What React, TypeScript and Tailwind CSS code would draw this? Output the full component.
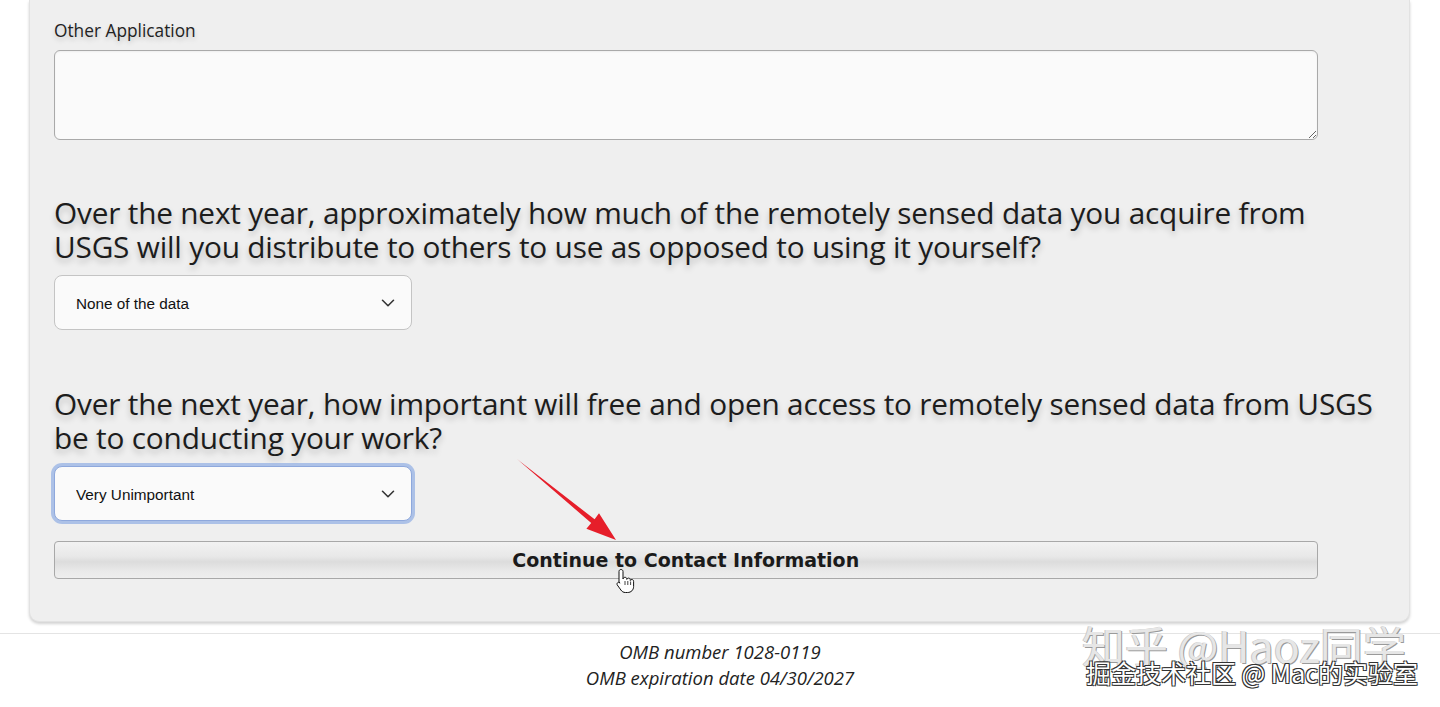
import { ChevronDown } from "lucide-react";

function Select({ value, focused = false }: { value: string; focused?: boolean }) {
  return (
    <div className="relative w-[358px] h-[55px]">
      <select
        defaultValue={value}
        className={`appearance-none block w-full h-full rounded-[8px] bg-[#fafafa] pl-[21px] pr-10 pt-[3px] text-[15.3px] text-[#111] font-['Liberation_Sans',Arial,sans-serif] outline-none ${
          focused
            ? "border border-[#8ea8dc] shadow-[0_0_0_3px_rgba(150,178,228,0.75)]"
            : "border border-[#c4c4c4]"
        }`}
      >
        <option>{value}</option>
      </select>
      <ChevronDown
        size={22}
        strokeWidth={1.7}
        className="pointer-events-none absolute right-[13px] top-1/2 -translate-y-1/2 text-[#333]"
      />
    </div>
  );
}

const headingCls =
  "text-[29.8px] leading-[34px] text-[#1c1c1c] tracking-[-0.2px] [text-shadow:0_4px_6px_rgba(0,0,0,0.22)]";

export default function App() {
  return (
    <div className="relative min-h-[707px] bg-white overflow-hidden font-['Open_Sans','Noto_Sans',sans-serif]">
      <div className="ml-[29px] w-[1381px] bg-[#efefef] rounded-b-[10px] border-x border-b border-[#e2e2e2] shadow-[0_2px_3px_rgba(0,0,0,0.18)] pl-[24px] pr-[25px] pt-[19px] pb-[42px]">
        <label className="block text-[17.3px] leading-[24px] text-[#222] [text-shadow:0_3px_5px_rgba(0,0,0,0.18)]">
          Other Application
        </label>
        <textarea className="mt-[7px] block w-[95%] h-[90px] rounded-[6px] border border-[#a9a9a9] bg-[#fafafa] shadow-[inset_0_1px_2px_rgba(0,0,0,0.05)] outline-none" />

        <h2 className={`mt-[56px] ${headingCls}`}>
          Over the next year, approximately how much of the remotely sensed data you acquire from USGS will you
          distribute to others to use as opposed to using it yourself?
        </h2>
        <div className="mt-[11px]">
          <Select value="None of the data" />
        </div>

        <h2 className={`mt-[57px] ${headingCls}`}>
          Over the next year, how important will free and open access to remotely sensed data from USGS be to
          conducting your work?
        </h2>
        <div className="mt-[11px]">
          <Select value="Very Unimportant" focused />
        </div>

        <button className="mt-[20px] block w-[95%] h-[38px] rounded-[4px] border border-[#a8a8a8] bg-[linear-gradient(to_bottom,#f2f2f2_0%,#e8e8e8_40%,#dcdcdc_55%,#e9e9e9_80%,#eeeeee_100%)] text-[19px] font-bold text-[#1a1a1a] font-['DejaVu_Sans',Verdana,sans-serif]">
          Continue to Contact Information
        </button>
      </div>

      <div className="mt-[11px] border-t border-[#e4e4e4] pt-[5px] text-center italic text-[18.5px] leading-[26px] text-[#222]">
        <p>OMB number 1028-0119</p>
        <p>OMB expiration date 04/30/2027</p>
      </div>

      {/* annotation arrow + cursor */}
      <svg className="pointer-events-none absolute left-0 top-0" width="1440" height="707">
        <polygon
          points="517,459 519.5,461 594.6,519.3 599,513.2 616,540 586.4,528.8 591.2,523"
          fill="#e61e2a"
        />
        <g transform="translate(616,568)">
          <path
            d="M5 1.5c1.2 0 2 .8 2 2V11l.2-.1c0-1 .8-1.6 1.8-1.6s1.8.7 1.8 1.7v.4c.2-.8.9-1.3 1.7-1.3 1 0 1.8.7 1.8 1.7v.7c.3-.6.9-1 1.6-1 1 0 1.7.8 1.7 1.8v5.2c0 3.5-2.5 6-6 6h-2.2c-2 0-3.4-.9-4.5-2.5L1.3 17c-.6-.9-.3-2 .6-2.5.8-.4 1.6-.2 2.2.5L3 14.5V3.5c0-1.2.8-2 2-2z"
            fill="#fff"
            stroke="#111"
            strokeWidth="1"
          />
          <path d="M9 13v4M11.8 13v4M14.6 13.5v3.5" stroke="#111" strokeWidth="0.8" />
        </g>
      </svg>

      {/* watermark */}
      <div className="pointer-events-none absolute left-[1082px] top-[618px] text-[43px] leading-[52px] text-[#e6e6e6] font-['Noto_Sans_CJK_SC',sans-serif] [text-shadow:1px_1px_0_#9a9a9a,-1px_0_0_#c8c8c8] whitespace-nowrap">
        知乎 @Haoz同学
      </div>
      <div className="pointer-events-none absolute left-[1086px] top-[656px] text-[25px] leading-[32px] text-white font-['Noto_Sans_CJK_SC',sans-serif] [text-shadow:1px_1px_0_#333,-1px_-1px_0_#333,1px_-1px_0_#333,-1px_1px_0_#333] whitespace-nowrap">
        掘金技术社区 @ Mac的实验室
      </div>
    </div>
  );
}
